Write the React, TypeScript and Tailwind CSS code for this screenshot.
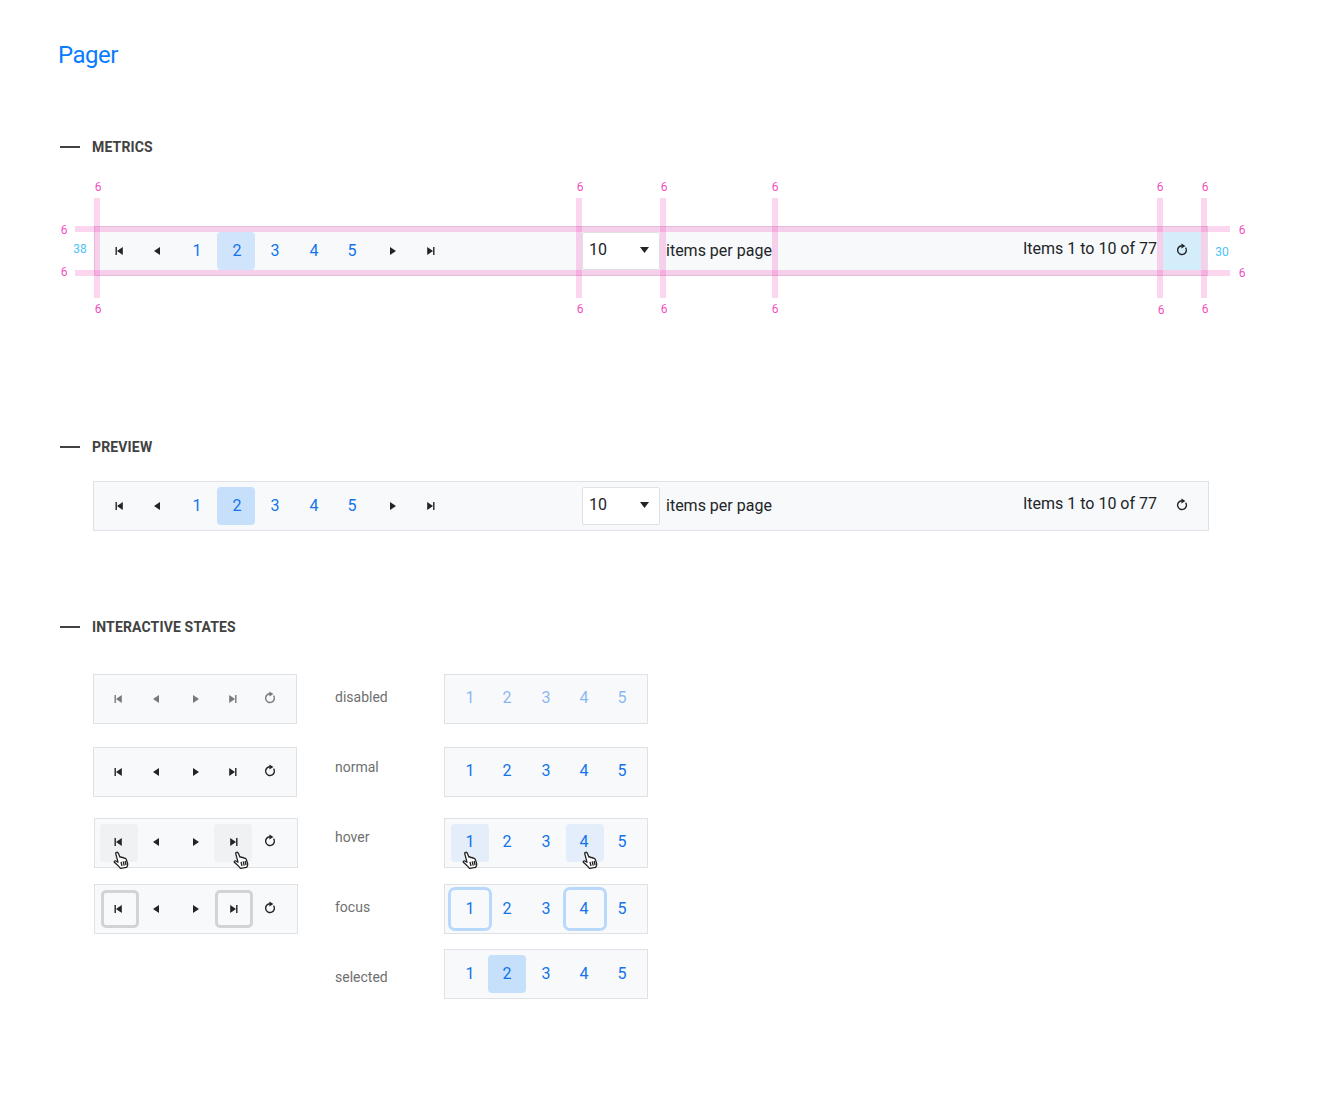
const font = "font-['Roboto','Liberation_Sans',sans-serif]";

function IconFirst() {
  return (
    <svg width="16" height="16" viewBox="0 0 16 16" fill="currentColor">
      <path d="M4.5 4h1.4v8H4.500zM11.800 3.900v8.200L6 8z" />
    </svg>
  );
}

function IconPrev() {
  return (
    <svg width="16" height="16" viewBox="0 0 16 16" fill="currentColor">
      <path d="M11 3.900v8.200L5 8z" />
    </svg>
  );
}

function IconNext() {
  return (
    <svg width="16" height="16" viewBox="0 0 16 16" fill="currentColor">
      <path d="M5 3.900v8.200L11 8z" />
    </svg>
  );
}

function IconLast() {
  return (
    <svg width="16" height="16" viewBox="0 0 16 16" fill="currentColor">
      <path d="M11.500 4h-1.400v8h1.400zM4.200 3.900v8.200L10 8z" />
    </svg>
  );
}

function IconRefresh() {
  return (
    <svg width="16" height="16" viewBox="0 0 16 16" fill="none">
      <path d="M11.600 4.600A4.400 4.400 0 1 1 7.800 2.750" stroke="currentColor" strokeWidth="1.400" />
      <path d="M7.400 .4v5.200L11.400 3z" fill="currentColor" />
    </svg>
  );
}

function Cursor({ className }: { className: string }) {
  return (
    <svg className={`absolute ${className}`} width="16" height="18" viewBox="0 0 16 18" fill="#fff" stroke="#222" strokeWidth="1.300" strokeLinejoin="round">
      <path d="M2.600 2.200C3.100 1 4.600 1 5.200 2L7 6.200C7.800 5.800 8.600 6 9 6.700C9.800 6.300 10.600 6.600 11 7.300C11.900 7 12.800 7.400 13.200 8.300L14.600 12.400C15 14 14.400 15.200 13.600 16.400L7.400 17.400C6.400 16 4.600 14.200 1.600 11.600C.8 10.800 1.600 9.600 2.800 10L5 11.200z" />
      <path d="M8 10.800l1 4.200M10.200 10.400l1 4.200M12.200 10l.8 4" fill="none" />
    </svg>
  );
}

const icons = [IconFirst, IconPrev, IconNext, IconLast, IconRefresh];

function Btn({ className = '', children }: { className?: string; children: React.ReactNode }) {
  return <div className={`relative flex h-[38px] w-[38px] shrink-0 items-center justify-center ${className}`}>{children}</div>;
}

function Pager({ className, selectedBg, refreshBg = '' }: { className: string; selectedBg: string; refreshBg?: string }) {
  return (
    <div className={`flex h-[50px] items-center border border-[#dee2e6] bg-[#f8f9fa] text-[16px] text-[#212529] ${className}`}>
      <Btn><IconFirst /></Btn>
      <Btn><IconPrev /></Btn>
      <div className="ml-[2px] flex gap-px text-[#1273eb]">
        <Btn>1</Btn>
        <Btn className={`rounded-[4px] ${selectedBg}`}><span className="translate-x-px">2</span></Btn>
        <Btn>3</Btn>
        <Btn>4</Btn>
        <Btn className="-ml-px">5</Btn>
      </div>
      <Btn className="ml-[3px]"><IconNext /></Btn>
      <Btn><IconLast /></Btn>
      <div className="ml-[132px] flex h-[38px] w-[78px] items-center justify-between rounded-[2px] border border-[#dee2e6] bg-white pb-[2px] pl-[6px] pr-[10px]">
        <span>10</span>
        <svg width="9" height="6" viewBox="0 0 9 6" fill="#212529"><path d="M0 0h9L4.500 6z" /></svg>
      </div>
      <span className="ml-[6px]">items per page</span>
      <span className="ml-auto mr-[6px] pb-[4px]">Items 1 to 10 of 77</span>
      <Btn className={refreshBg}><IconRefresh /></Btn>
    </div>
  );
}

function Box({ className = '', children }: { className?: string; children: React.ReactNode }) {
  return <div className={`flex h-[50px] w-[204px] items-center border border-[#dee2e6] bg-[#f8f9fa] pl-[5px] ${className}`}>{children}</div>;
}

function Heading({ children }: { children: React.ReactNode }) {
  return (
    <div className="ml-[60px] flex h-[20px] items-center">
      <div className="h-[2px] w-[20px] bg-[#424242]" />
      <h2 className="ml-[12px] text-[14px] font-bold uppercase tracking-[.15px] text-[#424242]">{children}</h2>
    </div>
  );
}

const bands = [
  'left-[-18px] top-0 h-[6px] w-[1155px]',
  'left-[-18px] top-[44px] h-[6px] w-[1155px]',
  'left-[1px] top-[-28px] h-[100px] w-[6px]',
  'left-[483px] top-[-28px] h-[100px] w-[6px]',
  'left-[567px] top-[-28px] h-[100px] w-[6px]',
  'left-[679px] top-[-28px] h-[100px] w-[6px]',
  'left-[1064px] top-[-28px] h-[100px] w-[6px]',
  'left-[1108px] top-[-28px] h-[100px] w-[6px]',
];

const labels = [
  'left-[5px] top-[-39px]',
  'left-[487px] top-[-39px]',
  'left-[571px] top-[-39px]',
  'left-[682px] top-[-39px]',
  'left-[1067px] top-[-39px]',
  'left-[1112px] top-[-39px]',
  'left-[5px] top-[83px]',
  'left-[487px] top-[83px]',
  'left-[571px] top-[83px]',
  'left-[682px] top-[83px]',
  'left-[1068px] top-[84px]',
  'left-[1112px] top-[83px]',
  'left-[-29px] top-[4px]',
  'left-[-29px] top-[46px]',
  'left-[1149px] top-[4px]',
  'left-[1149px] top-[47px]',
];

// icon rows: the spacing in the reference is not quite even
const iconGaps = ['', 'ml-0', 'ml-[2px]', '-ml-px', '-ml-px'];
const hoverGaps = ['', '-ml-px', 'ml-[2px]', '-ml-px', '-ml-px'];
const focusGaps = ['', '-ml-[2px]', 'ml-[2px]', '', '-ml-[2px]'];
const numGaps = ['', '-ml-px', 'ml-px', 'ml-px', '-ml-px'];

function IconRow({ muted = false }: { muted?: boolean }) {
  return (
    <Box className={muted ? 'text-[#212529]/60' : 'text-[#212529]'}>
      {icons.map((Icon, i) => (
        <Btn key={i} className={iconGaps[i]}><Icon /></Btn>
      ))}
    </Box>
  );
}

function NumRow({ muted = false, selected = false, hover = false, focus = false, className = '' }: { muted?: boolean; selected?: boolean; hover?: boolean; focus?: boolean; className?: string }) {
  return (
    <Box className={`pl-[6px] text-[16px] ${muted ? 'text-[#1273eb]/50' : 'text-[#1273eb]'}`}>
      {[1, 2, 3, 4, 5].map((n, i) => {
        const active = n === 1 || n === 4;
        return (
          <Btn
            key={n}
            className={`${numGaps[i]} ${selected && n === 2 ? 'rounded-[4px] bg-[#c6e0fb]' : ''} ${hover && active ? 'rounded-[4px] bg-[#e3eefa]' : ''} ${focus && active ? 'rounded-[4px] shadow-[0_0_0_3px_#b9d9fc]' : ''}`}
          >
            <span className={`${n === 4 ? 'mr-[2px]' : ''} ${className}`}>{n}</span>
            {hover && n === 1 && <Cursor className="left-[11px] top-[27px]" />}
            {hover && n === 4 && <Cursor className="left-[16px] top-[27px]" />}
          </Btn>
        );
      })}
    </Box>
  );
}

export default function App() {
  return (
    <div className={`min-h-[1111px] bg-white pt-[40px] ${font}`}>
      <h1 className="ml-[58px] text-[24px] leading-[30px] tracking-[-.5px] text-[#0a7cff]">Pager</h1>

      <div className="mt-[67px]"><Heading>Metrics</Heading></div>

      <div className="relative ml-[93px] mt-[69px] w-[1116px]">
        <Pager className="ml-px w-[1114px] pl-[5px] pr-[6px]" selectedBg="bg-[#d0e4fb]" refreshBg="bg-[#d4edfa]" />
        {bands.map((b) => (
          <div key={b} className={`absolute bg-[#ee2fb0]/20 ${b}`} />
        ))}
        {labels.map((l) => (
          <span key={l} className={`absolute -translate-x-1/2 -translate-y-1/2 text-[12px] leading-none text-[#f24fc0] ${l}`}>6</span>
        ))}
        <span className="absolute left-[-13px] top-[23px] -translate-x-1/2 -translate-y-1/2 text-[12px] leading-none text-[#4fc3f7]">38</span>
        <span className="absolute left-[1129px] top-[26px] -translate-x-1/2 -translate-y-1/2 text-[12px] leading-none text-[#4fc3f7]">30</span>
      </div>

      <div className="mt-[161px]"><Heading>Preview</Heading></div>

      <Pager className="ml-[93px] mt-[24px] w-[1116px] pl-[6px] pr-[7px]" selectedBg="bg-[#c6e0fb]" />

      <div className="mt-[86px]"><Heading>Interactive states</Heading></div>

      <div className="ml-[93px] mt-[37px] flex items-start">
        <div className="w-[242px] shrink-0">
          <IconRow muted />
          <div className="mt-[23px]"><IconRow /></div>

          <Box className="ml-px mt-[21px] text-[#212529]">
            {icons.map((Icon, i) => (
              <Btn key={i} className={`${hoverGaps[i]} ${i === 0 || i === 3 ? 'rounded-[4px] bg-[#f0f1f2]' : ''}`}>
                <span className={i === 0 ? '-translate-x-px -translate-y-px' : i === 3 ? 'translate-x-px -translate-y-px' : '-translate-y-px'}><Icon /></span>
                {i === 0 && <Cursor className="left-[13px] top-[27px]" />}
                {i === 3 && <Cursor className="left-[19px] top-[27px]" />}
              </Btn>
            ))}
          </Box>

          <Box className="ml-px mt-[16px] pl-[6px] text-[#212529]">
            {icons.map((Icon, i) => (
              <Btn key={i} className={`${focusGaps[i]} ${i === 0 || i === 3 ? 'rounded-[5px] border-[3px] border-[#d1d3d5]' : ''}`}>
                <span className={i === 0 ? '-translate-x-[2px]' : ''}><Icon /></span>
              </Btn>
            ))}
          </Box>
        </div>

        <div className="mt-[13px] flex w-[109px] shrink-0 flex-col gap-[50px] text-[14px] leading-[20px] text-[#6f6f6f]">
          <span>disabled</span>
          <span>normal</span>
          <span>hover</span>
          <span>focus</span>
          <span>selected</span>
        </div>

        <div className="shrink-0">
          <NumRow muted className="-translate-y-px" />
          <div className="mt-[23px]"><NumRow className="-translate-y-px" /></div>
          <div className="mt-[21px]"><NumRow hover className="-translate-y-px" /></div>
          <div className="mt-[16px]"><NumRow focus /></div>
          <div className="mt-[15px]"><NumRow selected /></div>
        </div>
      </div>
    </div>
  );
}
